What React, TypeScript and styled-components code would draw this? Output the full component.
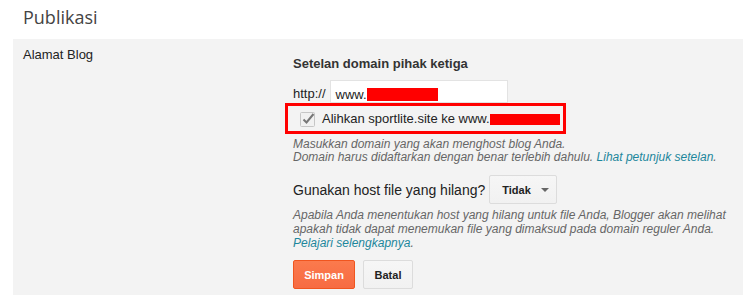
import { createGlobalStyle, styled } from 'styled-components'

const GlobalStyle = createGlobalStyle`
  body {
    margin: 0;
    background: #fff;
    font-family: "Liberation Sans", Arial, sans-serif;
    color: #222;
  }
`

function App() {
  return (
    <>
      <GlobalStyle />
      <PageTitle>Publikasi</PageTitle>
      <Panel>
        <Label>Alamat Blog</Label>
        <Content>
          <Heading>Setelan domain pihak ketiga</Heading>
          <UrlRow>
            <Prefix>http://</Prefix>
            <UrlBox>
              www.<Redact $w={71} $h={13} />
            </UrlBox>
          </UrlRow>
          <Highlight>
            <CheckIcon />
            <CheckLabel>
              Alihkan sportlite.site ke www.<Redact $w={70} $h={11} />
            </CheckLabel>
          </Highlight>
          <Help>
            Masukkan domain yang akan menghost blog Anda.
            <br />
            Domain harus didaftarkan dengan benar terlebih dahulu. <Link>Lihat petunjuk setelan</Link>.
          </Help>
          <QuestionRow>
            <Question>Gunakan host file yang hilang?</Question>
            <Dropdown>
              Tidak
              <Caret />
            </Dropdown>
          </QuestionRow>
          <Help $lh={14}>
            Apabila Anda menentukan host yang hilang untuk file Anda, Blogger akan melihat apakah tidak dapat
            menemukan file yang dimaksud pada domain reguler Anda.
            <br />
            <Link>Pelajari selengkapnya</Link>.
          </Help>
          <Actions>
            <Button $primary $w={62}>Simpan</Button>
            <Button $w={50}>Batal</Button>
          </Actions>
        </Content>
      </Panel>
    </>
  )
}

function CheckIcon() {
  return (
    <svg width="16" height="16" viewBox="0 0 16 16">
      <rect x="0.5" y="1.5" width="14" height="14" rx="1" fill="#f1f1f1" stroke="#c6c6c6" />
      <path d="M3.5 8.5 L6.5 11.5 L13.5 3" fill="none" stroke="#777" strokeWidth="2" />
    </svg>
  )
}

const PageTitle = styled.h1`
  margin: 0;
  height: 39px;
  box-sizing: border-box;
  padding: 5px 0 0 23px;
  font-family: "Open Sans", sans-serif;
  font-size: 18px;
  font-weight: 400;
  color: #444;
`

const Panel = styled.div`
  margin-left: 13px;
  width: 730px;
  height: 256px;
  box-sizing: border-box;
  padding-top: 8px;
  background: #f3f3f3;
  display: grid;
  grid-template-columns: 280px 1fr;
`

const Label = styled.div`
  padding-left: 10px;
  font-size: 13px;
  line-height: 15px;
  color: #222;
`

const Content = styled.div`
  display: flex;
  flex-direction: column;
  align-items: flex-start;
`

const Heading = styled.div`
  margin-top: 9px;
  font-size: 13px;
  line-height: 15px;
  font-weight: 700;
  color: #333;
`

const UrlRow = styled.div`
  margin-top: 9px;
  display: flex;
  align-items: flex-start;
  gap: 4px;
`

const Prefix = styled.span`
  margin-top: 6px;
  font-size: 13px;
  line-height: 15px;
`

const UrlBox = styled.div`
  width: 178px;
  height: 23px;
  box-sizing: border-box;
  padding: 6px 5px 0;
  background: #fff;
  border: 1px solid #e3e3e3;
  font-size: 13px;
  line-height: 15px;
  white-space: nowrap;
`

const Redact = styled.span<{ $w: number; $h: number }>`
  display: inline-block;
  width: ${({ $w }) => $w}px;
  height: ${({ $h }) => $h}px;
  background: #ff0000;
  vertical-align: -2px;
`

const Highlight = styled.div`
  margin-left: -8px;
  width: 281px;
  height: 31px;
  box-sizing: border-box;
  border: 3px solid #ff0000;
  padding-left: 12px;
  display: flex;
  align-items: center;
  gap: 6px;
`

const CheckLabel = styled.span`
  font-size: 13px;
  line-height: 15px;
  color: #222;
  white-space: nowrap;
`

const Help = styled.p<{ $lh?: number }>`
  margin: 4px 0 0;
  font-size: 12px;
  line-height: ${({ $lh }) => $lh ?? 13}px;
  font-style: italic;
  color: #666;
`

const Link = styled.a`
  color: #1d879c;
  cursor: pointer;
`

const QuestionRow = styled.div`
  margin-top: 11px;
  display: flex;
  align-items: center;
  gap: 4px;
`

const Question = styled.span`
  font-size: 14px;
  line-height: 16px;
  padding-top: 1px;
  color: #222;
`

const Dropdown = styled.div`
  width: 68px;
  height: 29px;
  box-sizing: border-box;
  padding-left: 12px;
  display: flex;
  align-items: center;
  gap: 10px;
  background: linear-gradient(#f6f6f6, #f1f1f1);
  border: 1px solid #dcdcdc;
  border-radius: 2px;
  font-size: 11px;
  font-weight: 700;
  color: #222;
`

const Caret = styled.span`
  width: 0;
  height: 0;
  margin-top: 1px;
  border-left: 4px solid transparent;
  border-right: 4px solid transparent;
  border-top: 4px solid #666;
`

const Actions = styled.div`
  margin-top: 10px;
  display: flex;
  gap: 8px;
`

const Button = styled.button<{ $primary?: boolean; $w: number }>`
  width: ${({ $w }) => $w}px;
  height: 29px;
  box-sizing: border-box;
  padding: 0;
  border-radius: 2px;
  font-family: "Liberation Sans", Arial, sans-serif;
  font-size: 11px;
  font-weight: 700;
  cursor: pointer;
  color: ${({ $primary }) => ($primary ? '#fff' : '#222')};
  background: ${({ $primary }) =>
    $primary ? 'linear-gradient(#fb7a4d, #f76b42)' : 'linear-gradient(#f6f6f6, #f1f1f1)'};
  border: 1px solid ${({ $primary }) => ($primary ? '#f0551f' : '#dcdcdc')};
`

export default App
